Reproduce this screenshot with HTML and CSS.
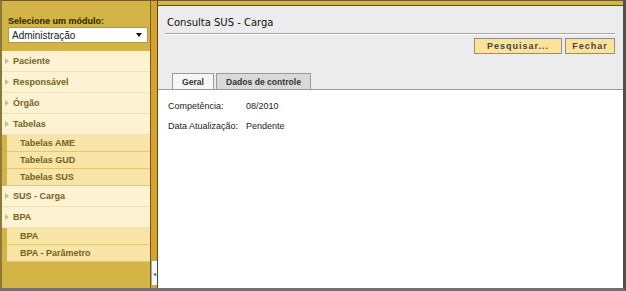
FILE: index.html
```html
<!DOCTYPE html>
<html lang="pt-BR">

<head>
    <meta charset="UTF-8">
    <title>Consulta SUS - Carga</title>
    <link rel="stylesheet" href="styles.css">
</head>

<body>
    <div class="app">
        <!-- Menu lateral -->
        <aside class="sidebar">
            <div class="module">
                <label class="module-label">Selecione um módulo:</label>
                <div class="select">
                    <span>Administração</span>
                    <span class="caret"></span>
                </div>
            </div>
            <ul class="menu">
                <li class="item">Paciente</li>
                <li class="item">Responsável</li>
                <li class="item">Órgão</li>
                <li class="item">Tabelas</li>
                <li class="sub">Tabelas AME</li>
                <li class="sub">Tabelas GUD</li>
                <li class="sub">Tabelas SUS</li>
                <li class="item">SUS - Carga</li>
                <li class="item">BPA</li>
                <li class="sub">BPA</li>
                <li class="sub">BPA - Parâmetro</li>
            </ul>
        </aside>

        <div class="splitter">
            <span class="handle">&#9666;</span>
        </div>

        <!-- Conteúdo -->
        <main class="panel">
            <div class="panel-head">
                <h1 class="title">Consulta SUS - Carga</h1>
                <div class="actions">
                    <button class="btn btn-wide">Pesquisar...</button>
                    <button class="btn">Fechar</button>
                </div>
                <div class="tabs">
                    <span class="tab active">Geral</span>
                    <span class="tab">Dados de controle</span>
                </div>
            </div>
            <table class="fields">
                <tr>
                    <td class="label">Competência:</td>
                    <td>08/2010</td>
                </tr>
                <tr>
                    <td class="label">Data Atualização:</td>
                    <td>Pendente</td>
                </tr>
            </table>
        </main>
    </div>
</body>

</html>
```

FILE: styles.css
```css
body {
    margin: 0;
    font-family: "Liberation Sans", Arial, sans-serif;
    background: #fff;
}

.app {
    display: flex;
    width: 626px;
    height: 291px;
    box-sizing: border-box;
    background-color: #D3B447;
    border-top: 1px solid #6E5C22;
    border-left: 2px solid #8C7838;
    border-right: 3px solid #505050;
    border-bottom: 3px solid #707070;
}

/* Menu lateral */
.sidebar {
    width: 148px;
    flex-shrink: 0;
}

.module {
    padding: 15px 0 0 6px;
}

.module-label {
    display: block;
    font-size: 9px;
    font-weight: bold;
    color: #2E2300;
    line-height: 11px;
}

.select {
    display: flex;
    justify-content: space-between;
    align-items: center;
    width: 140px;
    height: 16px;
    box-sizing: border-box;
    padding: 0 5px 0 3px;
    background-color: #fff;
    border: 1px solid #B29A4A;
    font-size: 10px;
    color: #222;
}

.caret {
    width: 0;
    height: 0;
    border-left: 3px solid transparent;
    border-right: 3px solid transparent;
    border-top: 4px solid #111;
}

.menu {
    list-style: none;
    margin: 8px 0 0 0;
    padding: 0;
}

.item,
.sub {
    display: flex;
    align-items: center;
    box-sizing: border-box;
    font-size: 9px;
    font-weight: bold;
    color: #75621F;
}

.item {
    height: 21px;
    padding-left: 11px;
    background-color: #FDF3D2;
    border-bottom: 1px solid #EFE2B4;
    position: relative;
}

.item::before {
    content: "";
    position: absolute;
    left: 3px;
    top: 7px;
    border-top: 3px solid transparent;
    border-bottom: 3px solid transparent;
    border-left: 4px solid #B9C28E;
}

.sub {
    height: 17px;
    margin-left: 5px;
    padding-left: 13px;
    background-color: #F7E4A6;
    border-bottom: 1px solid #E3C86C;
}

/* Divisor */
.splitter {
    width: 6px;
    flex-shrink: 0;
    display: flex;
    flex-direction: column;
    justify-content: flex-end;
    background-color: #D8A232;
    border-left: 1px solid #7A5A14;
    border-right: 1px solid #5E4510;
}

.handle {
    height: 24px;
    margin-bottom: 2px;
    background-color: #F4F7FA;
    border: 1px solid #9AA7B5;
    border-right: none;
    font-size: 6px;
    color: #2F5A8A;
    display: flex;
    align-items: center;
    justify-content: center;
}

/* Painel principal */
.panel {
    flex: 1;
    margin-top: 4px;
    background-color: #fff;
    border-top: 1px solid #5E5020;
}

.panel-head {
    background-color: #ECECEC;
    padding: 0 8px 0 7px;
    border-bottom: 1px solid #999;
}

.title {
    margin: 0;
    padding: 11px 0 4px 2px;
    font-family: "DejaVu Sans", Verdana, sans-serif;
    font-size: 10px;
    line-height: 12px;
    font-weight: normal;
    color: #111;
    border-bottom: 1px solid #A8A8A8;
    box-shadow: 0 1px 0 #fff;
}

.actions {
    display: flex;
    justify-content: flex-end;
    gap: 3px;
    margin-top: 4px;
}

.btn {
    height: 16px;
    padding: 0;
    background-color: #FDE393;
    border: 1px solid #8E8E8E;
    font-family: "Liberation Sans", Arial, sans-serif;
    font-size: 9px;
    font-weight: bold;
    letter-spacing: 1px;
    color: #444;
    width: 50px;
}

.btn-wide {
    width: 88px;
}

.tabs {
    display: flex;
    gap: 2px;
    margin-top: 19px;
    padding-left: 7px;
}

.tab {
    height: 15px;
    display: flex;
    align-items: center;
    padding: 0 9px;
    font-size: 8.6px;
    font-weight: bold;
    color: #333;
    background-color: #D9D9D9;
    border: 1px solid #9A9A9A;
    border-bottom: none;
}

.tab.active {
    background-color: #F6F6F6;
}

.fields {
    margin: 6px 0 0 10px;
    border-collapse: collapse;
    font-size: 9px;
    color: #222;
}

.fields td {
    height: 20px;
    padding: 0 8px 0 0;
}
```
